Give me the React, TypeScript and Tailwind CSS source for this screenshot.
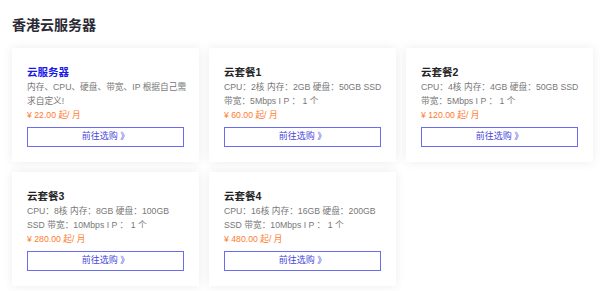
type Plan = {
  name: string;
  lines: string[];
  price: string;
  highlight?: boolean;
};

const plans: Plan[] = [
  {
    name: "云服务器",
    lines: ["内存、CPU、硬盘、带宽、IP 根据自己需", "求自定义!"],
    price: "¥ 22.00 起/ 月",
    highlight: true,
  },
  {
    name: "云套餐1",
    lines: ["CPU：2核 内存：2GB 硬盘：50GB SSD", "带宽：5Mbps I P ： 1 个"],
    price: "¥ 60.00 起/ 月",
  },
  {
    name: "云套餐2",
    lines: ["CPU：4核 内存：4GB 硬盘：50GB SSD", "带宽：5Mbps I P ： 1 个"],
    price: "¥ 120.00 起/ 月",
  },
  {
    name: "云套餐3",
    lines: ["CPU：8核 内存：8GB 硬盘：100GB", "SSD 带宽：10Mbps I P ： 1 个"],
    price: "¥ 280.00 起/ 月",
  },
  {
    name: "云套餐4",
    lines: ["CPU：16核 内存：16GB 硬盘：200GB", "SSD 带宽：10Mbps I P ： 1 个"],
    price: "¥ 480.00 起/ 月",
  },
];

function PlanCard({ plan }: { plan: Plan }) {
  return (
    <div className="bg-white px-[15px] pt-[16px] pb-[15px] shadow-[0_0_10px_rgba(0,0,0,0.08)]">
      <h3
        className={`text-[10.5px] font-bold leading-[16px] ${
          plan.highlight ? "text-[#1a1ae6]" : "text-[#222]"
        }`}
      >
        {plan.name}
      </h3>
      <div className="text-[8.7px] leading-[14px] text-[#777]">
        {plan.lines.map((line) => (
          <p key={line} className="whitespace-nowrap">
            {line}
          </p>
        ))}
      </div>
      <p className="text-[8.7px] leading-[14px] text-[#ff7a2e]">{plan.price}</p>
      <button
        type="button"
        className="mt-[5px] flex h-[20px] w-full items-center justify-center border border-[#6c6cf2] text-[9px] text-[#4646dc]"
      >
        前往选购 》
      </button>
    </div>
  );
}

export default function App() {
  return (
    <div
      className="min-h-screen bg-white px-[12px] pt-[17px]"
      style={{ fontFamily: '"Liberation Sans", "Noto Sans CJK SC", sans-serif' }}
    >
      <h2 className="mb-[15px] text-[14px] font-bold leading-[16px] text-[#2a2a35]">
        香港云服务器
      </h2>
      <div className="grid w-[581px] grid-cols-3 gap-[10px]">
        {plans.map((plan) => (
          <PlanCard key={plan.name} plan={plan} />
        ))}
      </div>
    </div>
  );
}
